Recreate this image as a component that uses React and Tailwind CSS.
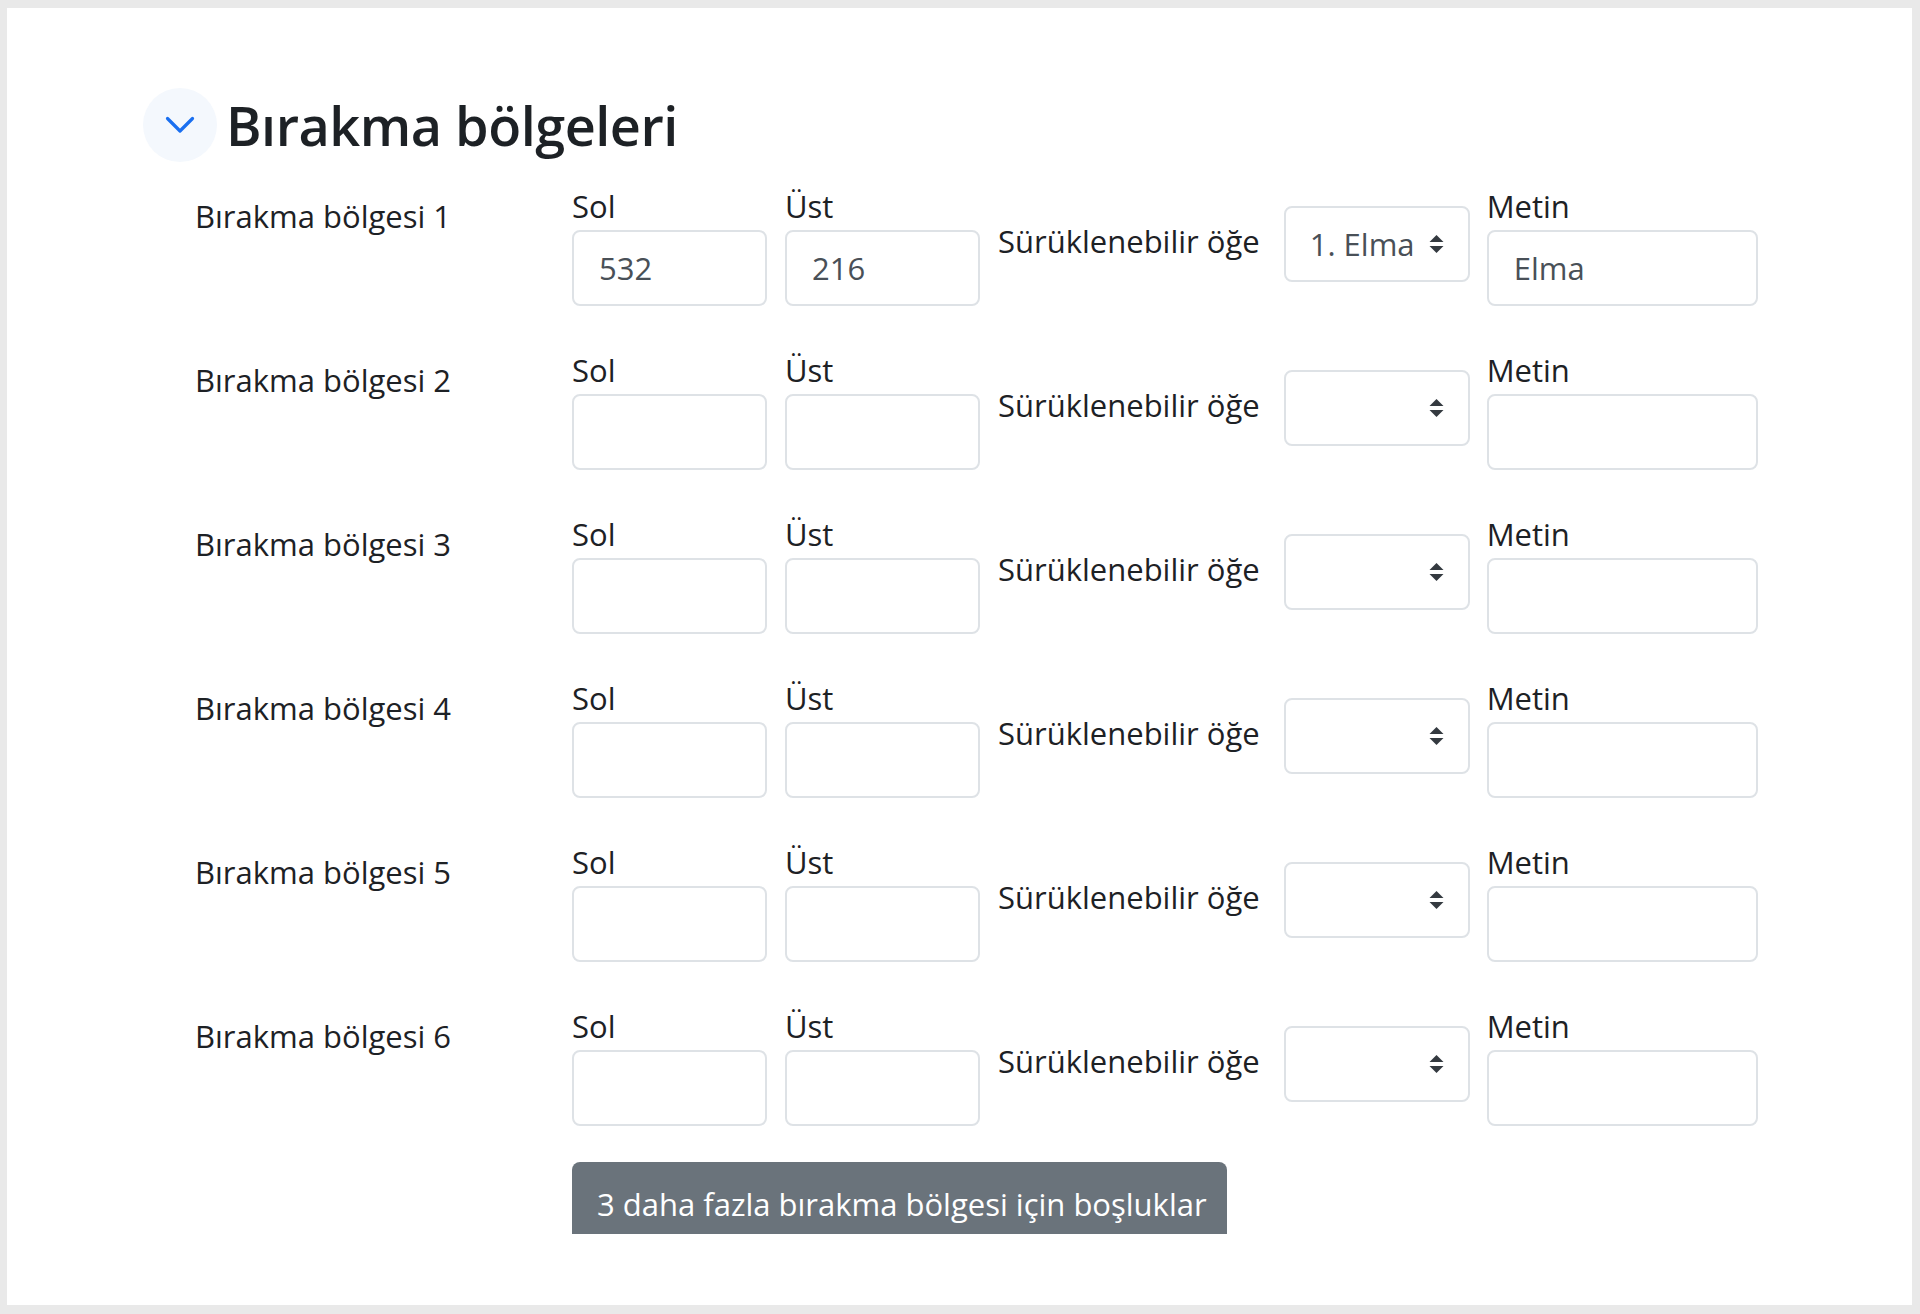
import { useState } from "react";

const zones = [
  { left: "532", top: "216", item: "1. Elma", text: "Elma" },
  { left: "", top: "", item: "", text: "" },
  { left: "", top: "", item: "", text: "" },
  { left: "", top: "", item: "", text: "" },
  { left: "", top: "", item: "", text: "" },
  { left: "", top: "", item: "", text: "" },
];

function SortArrows() {
  return (
    <svg width="15" height="18" viewBox="0 0 15 18" className="shrink-0">
      <path d="M7.5 0 L14.5 7 L0.5 7 Z" fill="#343a40" />
      <path d="M0.5 11 L14.5 11 L7.5 18 Z" fill="#343a40" />
    </svg>
  );
}

function Field({ label, value, width }) {
  return (
    <div className={`flex flex-col ${width}`}>
      <label className="h-[48px] leading-[48px] text-[#1d2125]">{label}</label>
      <div className="h-[76px] rounded-[8px] border-2 border-[#dee2e6] bg-white px-[25px] leading-[72px] text-[#495057]">
        {value}
      </div>
    </div>
  );
}

function ZoneRow({ index, zone }) {
  return (
    <div className="flex h-[124px] items-stretch">
      <div className="w-[377px] pt-[10px] leading-[49px] text-[#1d2125]">
        Bırakma bölgesi {index}
      </div>
      <Field label="Sol" value={zone.left} width="w-[195px]" />
      <div className="w-[18px]" />
      <Field label="Üst" value={zone.top} width="w-[195px]" />
      <div className="self-center pl-[18px] pr-[24px] pb-[6px] text-[#1d2125]">
        Sürüklenebilir öğe
      </div>
      <div className="flex h-[76px] w-[186px] items-center justify-between self-center rounded-[8px] border-2 border-[#dee2e6] bg-white pl-[24px] pr-[24px] text-[#495057]">
        <span>{zone.item}</span>
        <SortArrows />
      </div>
      <div className="w-[17px]" />
      <Field label="Metin" value={zone.text} width="w-[271px]" />
    </div>
  );
}

export default function App() {
  const [open, setOpen] = useState(true);

  return (
    <div
      className="min-h-[1314px] bg-[#e9e9e9] pt-[8px] pr-[8px] pb-[9px] pl-[7px]"
      style={{ fontFamily: '"Open Sans", "Noto Sans", sans-serif' }}
    >
      <div className="h-[1297px] bg-white pl-[136px] pt-[80px] text-[31px]">
        <div className="flex items-center gap-[9px]">
          <button
            type="button"
            onClick={() => setOpen(!open)}
            className="flex h-[74px] w-[74px] items-center justify-center rounded-full bg-[#f4f8fd]"
          >
            <svg width="30" height="18" viewBox="0 0 30 18">
              <path
                d="M2.5 2.5 L15 15 L27.5 2.5"
                fill="none"
                stroke="#1a6ff0"
                strokeWidth="3.2"
                strokeLinecap="round"
                strokeLinejoin="round"
              />
            </svg>
          </button>
          <h3 className="text-[54px] font-semibold leading-[74px] tracking-[-0.5px] text-[#1d2125]">
            Bırakma bölgeleri
          </h3>
        </div>

        <div className="mt-[20px] flex flex-col gap-[40px] pl-[52px]">
          {zones.map((zone, i) => (
            <ZoneRow key={i} index={i + 1} zone={zone} />
          ))}
        </div>

        <div className="mt-[36px] pl-[429px]">
          <button
            type="button"
            className="h-[72px] w-[655px] overflow-hidden rounded-t-[8px] bg-[#6a737b] pt-[12px] text-left pl-[25px] leading-[49px] text-white"
          >
            3 daha fazla bırakma bölgesi için boşluklar
          </button>
        </div>
      </div>
    </div>
  );
}
